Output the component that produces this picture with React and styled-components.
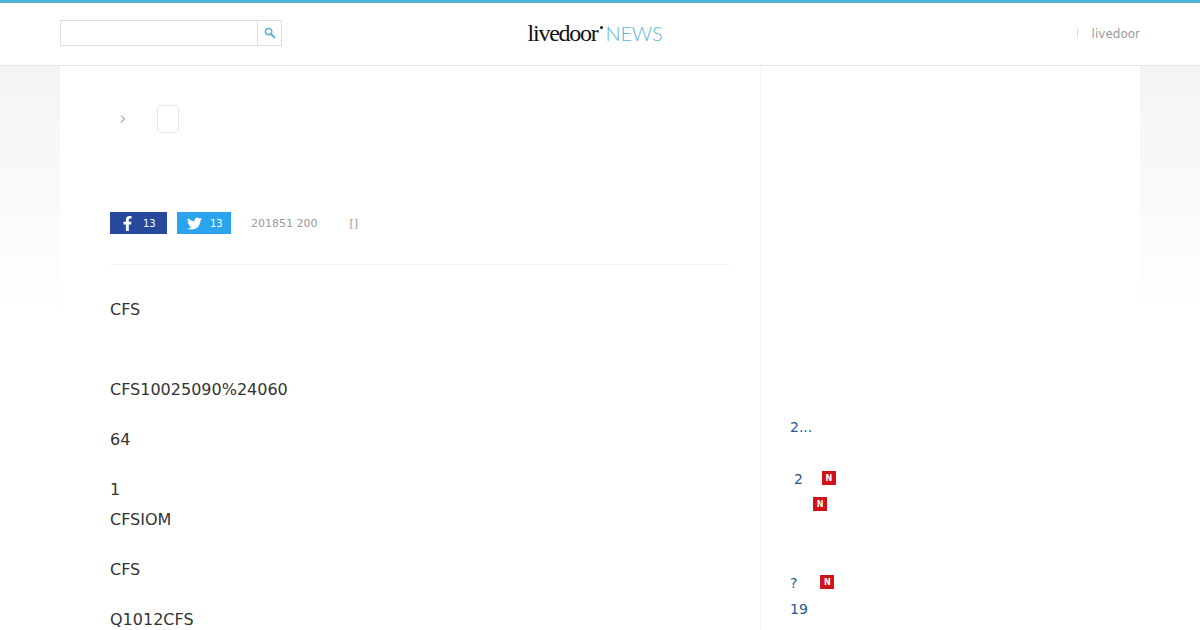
import styled, { createGlobalStyle } from "styled-components";
import { FaFacebookF, FaTwitter } from "react-icons/fa";

const paragraphs = [
  { text: "CFS", after: 50 },
  { text: "CFS10025090%24060" },
  { text: "64" },
  { text: "1\nCFSIOM" },
  { text: "CFS" },
  { text: "Q1012CFS" },
];

const sideItems = [
  { text: "2..." },
  {},
  { text: "2", indent: 4, badgeGap: 19 },
  { badgeAt: 23 },
  {},
  {},
  { text: "?", badgeGap: 23 },
  { text: "19" },
];

export default function App() {
  return (
    <Page>
      <GlobalStyle />
      <Header>
        <SearchBox>
          <SearchInput />
          <SearchButton>
            <svg width="12" height="12" viewBox="0 0 12 12">
              <circle cx="4.6" cy="4.6" r="3.2" fill="none" stroke="#5fb4d2" strokeWidth="1.5" />
              <path d="M7 7l4 4" stroke="#5fb4d2" strokeWidth="2" />
            </svg>
          </SearchButton>
        </SearchBox>
        <Logo>
          <LogoMain>livedoor</LogoMain>
          <LogoDot />
          <LogoNews>NEWS</LogoNews>
        </Logo>
        <HeaderLink>livedoor</HeaderLink>
      </Header>
      <Main>
        <Article>
          <Breadcrumb>
            <svg width="6" height="8" viewBox="0 0 6 8">
              <path d="M1 .5 4.5 4 1 7.5" fill="none" stroke="#777" strokeWidth="1" />
            </svg>
            <CrumbTag />
          </Breadcrumb>
          <Meta>
            <ShareButton $bg="#27499d" $width={57} $gap={8}>
              <FaFacebookF size={15} />
              <span>13</span>
            </ShareButton>
            <ShareButton $bg="#2ba3ed" $width={54} $gap={8}>
              <FaTwitter size={15} />
              <span>13</span>
            </ShareButton>
            <MetaDate>201851 200</MetaDate>
            <MetaSource>[]</MetaSource>
          </Meta>
          <Body>
            {paragraphs.map((item, index) => (
              <Paragraph key={index} $after={item.after}>{item.text}</Paragraph>
            ))}
          </Body>
        </Article>
        <Side>
          <SideList>
            {sideItems.map((item, index) => (
              <SideRow key={index} $indent={item.indent}>
                {item.text}
                {(item.badgeGap || item.badgeAt) && (
                  <Badge $gap={item.badgeGap} $at={item.badgeAt}>N</Badge>
                )}
              </SideRow>
            ))}
          </SideList>
        </Side>
      </Main>
    </Page>
  );
}

const GlobalStyle = createGlobalStyle`
  * {
    box-sizing: border-box;
  }

  body {
    margin: 0;
    font-family: "DejaVu Sans", sans-serif;
    background: #fff;
  }
`;

const Page = styled.div`
  height: 100vh;
  overflow: hidden;
  background: linear-gradient(#f3f4f6 66px, #ffffff 320px);
`;

const Header = styled.header`
  height: 66px;
  padding: 0 60px;
  display: grid;
  grid-template-columns: 1fr auto 1fr;
  align-items: center;
  background: #fff;
  border-top: 3px solid #52b3d5;
  border-bottom: 1px solid #e4e4e4;
`;

const SearchBox = styled.div`
  display: flex;
  height: 26px;
  margin-top: -3px;
`;

const SearchInput = styled.div`
  width: 198px;
  border: 1px solid #ddd;
`;

const SearchButton = styled.div`
  width: 25px;
  margin-left: -1px;
  display: flex;
  align-items: center;
  justify-content: center;
  border: 1px solid #ddd;
`;

const Logo = styled.div`
  display: flex;
  align-items: baseline;
  margin: -2px 10px 0 0;
`;

const LogoMain = styled.span`
  font-family: "Liberation Serif", serif;
  font-size: 24px;
  letter-spacing: -1.25px;
  color: #111;
`;

const LogoDot = styled.span`
  width: 3px;
  height: 3px;
  margin: 0 3px 0 2px;
  border-radius: 50%;
  background: #111;
  transform: translateY(-12px);
`;

const LogoNews = styled.span`
  font-family: Lato, sans-serif;
  font-size: 20px;
  font-weight: 300;
  letter-spacing: -0.2px;
  color: #5fb4d2;
`;

const HeaderLink = styled.div`
  justify-self: end;
  margin-top: -1px;
  padding-left: 15px;
  font-size: 12px;
  color: #999;
  position: relative;

  &::before {
    content: "";
    position: absolute;
    left: 0;
    top: 1px;
    height: 10px;
    border-left: 1px solid #ddd;
  }
`;

const Main = styled.main`
  width: 1080px;
  height: 564px;
  margin: 0 auto;
  display: flex;
  background: #fff;
`;

const Article = styled.article`
  width: 701px;
  padding: 39px 30px 0 50px;
  border-right: 1px solid #f4f4f4;
`;

const Breadcrumb = styled.div`
  height: 28px;
  padding-left: 10px;
  display: flex;
  align-items: center;
  gap: 31px;
`;

const CrumbTag = styled.div`
  width: 22px;
  height: 28px;
  border: 1px solid #e8e8e8;
  border-radius: 4px;
`;

const Meta = styled.div`
  height: 53px;
  margin-top: 79px;
  display: flex;
  align-items: flex-start;
  gap: 10px;
  border-bottom: 1px solid #f0f0f0;
`;

const ShareButton = styled.div`
  width: ${(props) => props.$width}px;
  height: 22px;
  padding-left: 10px;
  display: flex;
  align-items: center;
  gap: ${(props) => props.$gap}px;
  font-size: 10px;
  color: #fff;
  background: ${(props) => props.$bg};
`;

const MetaDate = styled.div`
  height: 22px;
  margin-left: 10px;
  font-size: 11px;
  line-height: 23px;
  color: #999;
`;

const MetaSource = styled(MetaDate)`
  margin-left: 22px;
`;

const Body = styled.div`
  padding-top: 30px;
`;

const Paragraph = styled.p`
  margin: 0 0 ${(props) => props.$after || 20}px;
  font-size: 16px;
  line-height: 30px;
  color: #333;
  white-space: pre-line;
`;

const Side = styled.aside`
  flex: 1;
  padding: 348px 30px 0 29px;
`;

const SideList = styled.div`
  display: flex;
  flex-direction: column;
`;

const SideRow = styled.div`
  height: 26px;
  padding-left: ${(props) => props.$indent || 0}px;
  display: flex;
  align-items: center;
  font-size: 14px;
  color: #1d5a94;
`;

const Badge = styled.span`
  width: 14px;
  height: 14px;
  margin-left: ${(props) => props.$at ?? props.$gap}px;
  margin-top: -2px;
  display: flex;
  align-items: center;
  justify-content: center;
  font-size: 8px;
  font-weight: 700;
  color: #fff;
  background: #d0121b;
`;
